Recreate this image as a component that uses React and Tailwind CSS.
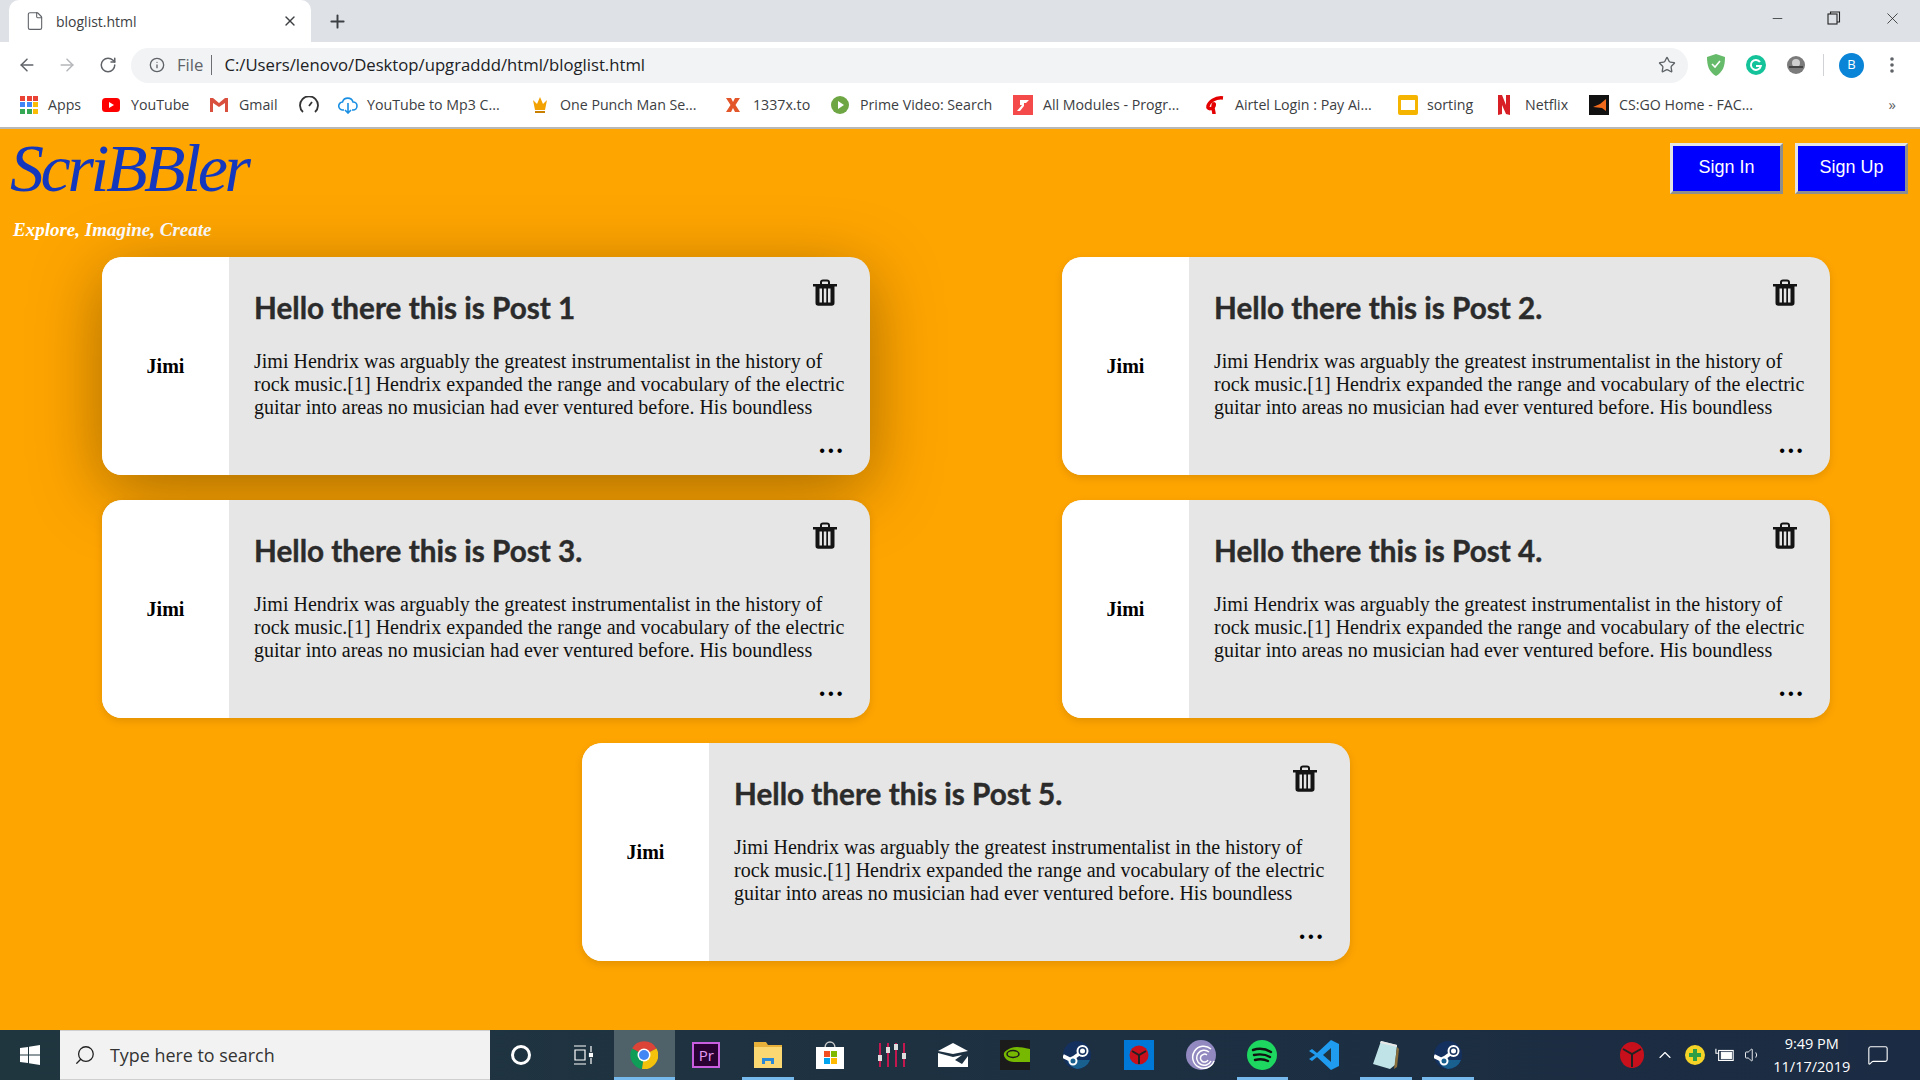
import React from 'react';
import { ArrowLeft, ArrowRight, RotateCw, Info, Star, X, Plus, Minus, File, Search, ChevronUp, Volume1, MessageSquare } from 'lucide-react';

const body = 'Jimi Hendrix was arguably the greatest instrumentalist in the history of rock music.[1] Hendrix expanded the range and vocabulary of the electric guitar into areas no musician had ever ventured before. His boundless';

function Trash() {
  return (
    <svg viewBox="0 0 24 27" className="w-[24px] h-[27px]">
      <path d="M0 5h24v2.4H0zM7 5V3.2C7 1.4 8.2.4 10 .4h4c1.800 0 3 1 3 2.800V5h-2V3.400c0-.6-.4-1-1-1h-4c-.6 0-1 .4-1 1V5z" fill="#141414" />
      <path fillRule="evenodd" d="M2.500 7h19v17c0 1.700-1.100 2.800-2.800 2.800H5.300c-1.700 0-2.800-1.100-2.800-2.800zM6.500 9.500v14h2.500v-14zM10.800 9.500v14h2.500v-14zM15 9.500v14h2.500v-14z" fill="#141414" />
    </svg>
  );
}

function Card({ title, shadow }) {
  return (
    <div className={`relative flex w-[768px] h-[218px] rounded-[20px] overflow-hidden bg-[#e6e6e6] ${shadow}`}>
      <div className="w-[127px] bg-white flex items-center justify-center font-['Liberation_Serif',serif] font-bold text-[20px] text-black">Jimi</div>
      <div className="flex-1 pl-[25px] pr-[25px] pt-[31px] flex flex-col">
        <h2 className="font-['Lato',sans-serif] font-bold text-[29.700px] leading-[40px] text-[#2b2b2b] [-webkit-text-stroke:0.4px_#2b2b2b]">{title}</h2>
        <p className="mt-[22px] font-['Liberation_Serif',serif] text-[20px] leading-[23px] text-[#111]">{body}</p>
        <div className="mt-[13px] text-right font-['Liberation_Serif',serif] font-bold text-[27px] leading-[24px] tracking-[2px] text-black">...</div>
      </div>
      <div className="absolute top-[22px] right-[33px]"><Trash /></div>
    </div>
  );
}

function TabBar() {
  return (
    <div className="h-[42px] bg-[#dee1e6] flex items-end pl-[9px]">
      <div className="w-[302px] h-[42px] bg-white rounded-t-[10px] flex items-center pl-[16px] pr-[13px] gap-[11px]">
        <File size={20} strokeWidth={1.300} className="text-[#5f6368]" />
        <span className="flex-1 font-['Open_Sans',sans-serif] text-[14px] text-[#3c4043]">bloglist.html</span>
        <X size={16} strokeWidth={2} className="text-[#3c4043]" />
      </div>
      <Plus size={21} strokeWidth={2.200} className="ml-[16px] mb-[10px] text-[#3c4043]" />
      <div className="flex-1" />
      <div className="flex items-center h-full pr-[18px] gap-[42px] pb-[6px] text-[#222]">
        <Minus size={15} strokeWidth={1.200} />
        <svg viewBox="0 0 14 14" className="w-[14px] h-[14px]" fill="none" stroke="#222" strokeWidth="1.100"><rect x="1" y="3" width="9" height="10" /><path d="M3.500 3V1h9v10h-2.500" /></svg>
        <X size={19} strokeWidth={1} />
      </div>
    </div>
  );
}

function Toolbar() {
  return (
    <div className="h-[46px] bg-white flex items-center">
      <ArrowLeft size={20} strokeWidth={1.800} className="ml-[17px] text-[#5f6368]" />
      <ArrowRight size={20} strokeWidth={1.800} className="ml-[20px] text-[#b4b6b9]" />
      <RotateCw size={18} strokeWidth={2} className="ml-[22px] text-[#5f6368]" />
      <div className="ml-[14px] w-[1557px] h-[35px] rounded-full bg-[#f1f3f4] flex items-center pl-[18px] font-['Open_Sans',sans-serif] text-[16.700px]">
        <Info size={16} strokeWidth={2} className="text-[#5f6368]" />
        <span className="ml-[12px] text-[#5f6368]">File</span>
        <span className="ml-[8px] w-px h-[20px] bg-[#6b6e72]" />
        <span className="ml-[12px] flex-1 text-[#202124]">C:/Users/lenovo/Desktop/upgraddd/html/bloglist.html</span>
        <Star size={18} strokeWidth={1.800} className="mr-[12px] text-[#5f6368]" />
      </div>
      <svg viewBox="0 0 20 22" className="ml-[18px] w-[20px] h-[22px]"><path d="M10 0l9 3c0 9-2 15-9 19C3 18 1 12 1 3z" fill="#66bb6a" /><path d="M6 10l3 3 5-6" fill="none" stroke="#fff" strokeWidth="1.600" /></svg>
      <svg viewBox="0 0 20 20" className="ml-[20px] w-[20px] h-[20px]"><circle cx="10" cy="10" r="10" fill="#15c39a" /><path d="M14 7a5 5 0 1 0 .8 4H10" fill="none" stroke="#fff" strokeWidth="2" /></svg>
      <svg viewBox="0 0 20 20" className="ml-[20px] w-[20px] h-[20px]"><circle cx="10" cy="10" r="9" fill="#7b7b7b" /><circle cx="10" cy="8" r="4" fill="#cfcfcf" /><path d="M3 12h14" stroke="#444" strokeWidth="2" /></svg>
      <span className="ml-[17px] w-px h-[22px] bg-[#d0d2d5]" />
      <span className="ml-[15px] w-[25px] h-[25px] rounded-full bg-[#0a84d6] text-white flex items-center justify-center font-['Open_Sans',sans-serif] text-[13px]">B</span>
      <svg viewBox="0 0 4 16" className="ml-[26px] w-[4px] h-[16px]" fill="#5f6368"><circle cx="2" cy="2" r="1.800" /><circle cx="2" cy="8" r="1.800" /><circle cx="2" cy="14" r="1.800" /></svg>
    </div>
  );
}

const appsDots = ['#ea4335', '#ea4335', '#ea4335', '#4285f4', '#4285f4', '#fbbc05', '#34a853', '#34a853', '#fbbc05'];

const bookmarks = [
  { w: 'w-[82px]', label: 'Apps', gap: 'ml-[10px]', icon: <div className="grid grid-cols-3 gap-[1.500px] w-[18px]">{appsDots.map((c, i) => <span key={i} className="w-[5px] h-[5px]" style={{ backgroundColor: c }} />)}</div> },
  { w: 'w-[108px]', label: 'YouTube', gap: 'ml-[11px]', icon: <svg viewBox="0 0 18 14" className="w-[18px] h-[14px]"><rect width="18" height="14" rx="3.500" fill="#f00" /><path d="M7 4l5 3-5 3z" fill="#fff" /></svg> },
  { w: 'w-[89px]', label: 'Gmail', gap: 'ml-[11px]', icon: <svg viewBox="0 0 18 14" className="w-[18px] h-[14px]"><path d="M0 0h3l6 5 6-5h3v14h-3V5L9 9 3 5v9H0z" fill="#d9503f" /></svg> },
  { w: 'w-[39px]', label: '', icon: <svg viewBox="0 0 20 18" className="w-[20px] h-[18px]" fill="none" stroke="#333" strokeWidth="1.800"><path d="M4 16a9 9 0 1 1 12 0M10 10l3-4" /></svg> },
  { w: 'w-[193px]', label: 'YouTube to Mp3 C...', gap: 'ml-[9px]', icon: <svg viewBox="0 0 20 18" className="w-[20px] h-[18px]" fill="none" stroke="#1a8fe3" strokeWidth="1.600"><path d="M6 14H5a4 4 0 0 1-.5-8A5.500 5.500 0 0 1 15 6a4 4 0 0 1 0 8h-1M10 7v10M7 14l3 3 3-3" /></svg> },
  { w: 'w-[194px]', label: 'One Punch Man Se...', gap: 'ml-[11px]', icon: <svg viewBox="0 0 18 18" className="w-[18px] h-[18px]"><path d="M2 4l4 4 3-7 3 7 4-4-2 10H4z" fill="#f2a100" /><rect x="4" y="15" width="10" height="2" fill="#c97f00" /></svg> },
  { w: 'w-[106px]', label: '1337x.to', gap: 'ml-[12px]', icon: <svg viewBox="0 0 16 16" className="w-[16px] h-[16px]"><path d="M1 1h5l2 4 2-4h5l-4.500 7L15 15h-5l-2-4-2 4H1l4.500-7z" fill="#e2562a" /></svg> },
  { w: 'w-[182px]', label: 'Prime Video: Search', gap: 'ml-[11px]', icon: <svg viewBox="0 0 18 18" className="w-[18px] h-[18px]"><circle cx="9" cy="9" r="9" fill="#6ea644" /><path d="M7 5l6 4-6 4z" fill="#fff" /></svg> },
  { w: 'w-[192px]', label: 'All Modules - Progr...', gap: 'ml-[10px]', icon: <svg viewBox="0 0 20 20" className="w-[20px] h-[20px]"><rect width="20" height="20" fill="#f44a4a" /><path d="M7 5h9l-3 3h-2v3l-4 5H4l5-6H7z" fill="#fff" /></svg> },
  { w: 'w-[193px]', label: 'Airtel Login : Pay Ai...', gap: 'ml-[10px]', icon: <svg viewBox="0 0 20 20" className="w-[20px] h-[20px]" fill="none" stroke="#e40000" strokeWidth="3.500"><path d="M18 3C10 2 4 7 3 11c-1 4 5 3 6 0 1-3-1-3-1 1 0 3 1 5 1 7" /></svg> },
  { w: 'w-[100px]', label: 'sorting', gap: 'ml-[9px]', icon: <svg viewBox="0 0 20 20" className="w-[20px] h-[20px]"><rect width="20" height="20" rx="2" fill="#f4b400" /><rect x="3" y="5" width="14" height="10" fill="#fff" /></svg> },
  { w: 'w-[91px]', label: 'Netflix', gap: 'ml-[15px]', icon: <svg viewBox="0 0 12 20" className="w-[12px] h-[20px]"><path d="M0 0h4l4 10V0h4v20l-4-1-4-9v9l-4 1z" fill="#d81f26" /></svg> },
  { w: 'w-[200px]', label: 'CS:GO Home - FAC...', gap: 'ml-[10px]', icon: <svg viewBox="0 0 20 20" className="w-[20px] h-[20px]"><rect width="20" height="20" fill="#111" /><path d="M17 4v12l-4-3-9-1 7-3z" fill="#f26a1b" /></svg> },
];

function Bookmarks() {
  return (
    <div className="h-[41px] bg-white border-b-2 border-[#b8b8b8] flex items-center pb-[5px] pl-[20px] relative font-['Open_Sans',sans-serif] text-[14.200px] text-[#3c4043]">
      {bookmarks.map((b, i) => (
        <div key={i} className={`${b.w} flex items-center shrink-0 whitespace-nowrap`}>
          {b.icon}
          {b.label && <span className={b.gap}>{b.label}</span>}
        </div>
      ))}
      <span className="absolute right-[24px] top-[5px] text-[#5f6368] text-[15px]">»</span>
    </div>
  );
}

function ChromeIcon() {
  return (
    <svg viewBox="0 0 28 28" className="w-[28px] h-[28px]">
      <path d="M14 14L2 7.500A14 14 0 0 1 26.500 7.500z" fill="#db4437" />
      <path d="M14 14L2 7.500A14 14 0 0 0 12 28z" fill="#0f9d58" />
      <path d="M14 14L26.500 7.500A14 14 0 0 1 12 28z" fill="#f4c20d" />
      <circle cx="14" cy="14" r="6.500" fill="#fff" />
      <circle cx="14" cy="14" r="5" fill="#4285f4" />
    </svg>
  );
}

function Steam() {
  return (
    <svg viewBox="0 0 28 28" className="w-[28px] h-[28px]" fill="none">
      <circle cx="14" cy="14" r="14" fill="#14305e" />
      <path d="M14 28a14 14 0 0 0 13-9H4a14 14 0 0 0 10 9z" fill="#19608f" />
      <path d="M20 10L9 18" stroke="#fff" strokeWidth="3.500" />
      <path d="M0 15l10 5" stroke="#fff" strokeWidth="4" />
      <circle cx="19.500" cy="10" r="5" stroke="#fff" strokeWidth="2" fill="#14305e" />
      <circle cx="19.500" cy="10" r="2.500" fill="#fff" />
      <circle cx="10" cy="20" r="3.500" stroke="#fff" strokeWidth="2" fill="#19608f" />
    </svg>
  );
}

function RedBug() {
  return (
    <svg viewBox="0 0 20 20" className="w-[20px] h-[20px]">
      <circle cx="10" cy="10" r="9.500" fill="#c8101c" />
      <path d="M3 6l7 4 7-4M10 10v9" fill="none" stroke="#222" strokeWidth="2" />
    </svg>
  );
}

const slots = [
  { icon: <div className="w-[20px] h-[20px] rounded-full border-[3px] border-white" /> },
  { icon: <svg viewBox="0 0 20 20" className="w-[20px] h-[20px]" fill="none" stroke="#fff" strokeWidth="1.200"><path d="M1 1h12M1 19h12M2 5h10v10H2zM18 1v6M18 13v6" /><rect x="16.500" y="8.500" width="3" height="3" fill="#fff" /></svg> },
  { active: true, icon: <ChromeIcon /> },
  { icon: <div className="w-[28px] h-[26px] bg-[#2a0133] border-2 border-[#c95fe0] flex items-center justify-center font-['Open_Sans',sans-serif] text-[15px] text-[#e39bf2]">Pr</div> },
  { line: true, icon: <svg viewBox="0 0 28 26" className="w-[28px] h-[26px]"><path d="M0 0h12l2 3h14v23H0z" fill="#e8b13a" /><path d="M0 5h28v21H0z" fill="#fcd873" /><path d="M8 22v-6h12v6h-3v-3h-6v3z" fill="#2b8ad8" /></svg> },
  { icon: <svg viewBox="0 0 28 28" className="w-[28px] h-[28px]"><path d="M9 7c0-8 10-8 10 0" fill="none" stroke="#ccc" strokeWidth="1.500" /><rect y="6" width="28" height="22" fill="#fff" /><rect x="8" y="10" width="6" height="6" fill="#f25022" /><rect x="15" y="10" width="6" height="6" fill="#7fba00" /><rect x="8" y="17" width="6" height="6" fill="#00a4ef" /><rect x="15" y="17" width="6" height="6" fill="#ffb900" /></svg> },
  { icon: <svg viewBox="0 0 30 24" className="w-[30px] h-[24px]"><path d="M3 0v24M11 0v24M19 0v24M27 0v24" stroke="#c2184f" strokeWidth="2" /><rect x="1" y="12" width="4" height="6" fill="#ddd" /><rect x="9" y="4" width="4" height="6" fill="#ddd" /><rect x="17" y="1" width="4" height="6" fill="#ddd" /><rect x="25" y="10" width="4" height="6" fill="#ddd" /></svg> },
  { icon: <svg viewBox="0 0 30 24" className="w-[30px] h-[24px]"><path d="M15 0l15 8-15 3L0 8zM0 10l15 4 9-2-7 5 7 4 6-8v11H0z" fill="#fff" /></svg> },
  { icon: <svg viewBox="0 0 30 30" className="w-[30px] h-[30px]"><rect width="30" height="30" fill="#1b1b1b" /><path d="M11 8c5-2 10-1 19 1v13H14C7 22 3 17 4 13c1-2 4-4 7-5z" fill="#76b900" /><ellipse cx="13" cy="14" rx="6" ry="3.500" fill="none" stroke="#1b1b1b" strokeWidth="1.500" /></svg> },
  { icon: <Steam /> },
  { icon: <div className="w-[30px] h-[30px] bg-[#0078d7] flex items-center justify-center"><RedBug /></div> },
  { icon: <svg viewBox="0 0 30 30" className="w-[30px] h-[30px]" fill="none"><circle cx="15" cy="15" r="15" fill="#9189c0" /><path d="M25 9a11 11 0 1 0 3 12M23 12a7.500 7.500 0 1 0 2 9M21 15a4 4 0 1 0 1 5" stroke="#fff" strokeWidth="1.500" /></svg> },
  { line: true, icon: <svg viewBox="0 0 30 30" className="w-[30px] h-[30px]" fill="none"><circle cx="15" cy="15" r="15" fill="#1ed760" /><path d="M6 10c6-2 13-1 18 2M7 15c5-1 11-1 16 2M8 20c4-1 9-1 13 1" stroke="#111" strokeWidth="2.400" strokeLinecap="round" /></svg> },
  { icon: <svg viewBox="0 0 30 30" className="w-[30px] h-[30px]"><path d="M22 0l8 4v22l-8 4L8 17l-5 4-3-2 6-4-6-4 3-2 5 4z" fill="#1f9cf0" /><path d="M22 8l-8 7 8 7z" fill="#1f3642" /></svg> },
  { line: true, icon: <svg viewBox="0 0 28 30" className="w-[28px] h-[30px]"><path d="M9 1l16 4-2 20-5 4L1 24z" fill="#bfe3e6" /><path d="M9 1l16 4v2L8 3z" fill="#e6e6e6" /><path d="M25 7l2 2-2 18-3 2z" fill="#8a6f3c" /></svg> },
  { line: true, icon: <Steam /> },
];

function Taskbar() {
  return (
    <div className="h-[50px] flex bg-linear-to-r from-[#20363f] to-[#1b2b43] text-white font-['Open_Sans',sans-serif]">
      <div className="w-[60px] flex items-center justify-center">
        <svg viewBox="0 0 20 20" className="w-[20px] h-[20px]" fill="#fff"><path d="M0 3l8-1.100V9.500H0zM9 1.700L20 0v9.500H9zM0 10.500h8V18l-8-1zM9 10.500h11V20L9 18.300z" /></svg>
      </div>
      <div className="w-[430px] bg-[#f2f2f2] border-y border-[#cfcfcf] flex items-center pl-[14px] text-[#333] text-[17.900px]">
        <Search size={22} strokeWidth={1.400} className="text-[#222] -scale-x-100" />
        <span className="ml-[14px]">Type here to search</span>
      </div>
      {slots.map((s, i) => (
        <div key={i} className={`w-[61.800px] shrink-0 flex items-center justify-center relative ${s.active ? 'bg-[#4f6169]' : ''}`}>
          {s.icon}
          {s.line && <span className="absolute bottom-0 left-[5px] right-[5px] h-[3px] bg-[#76b9ed]" />}
          {s.active && <span className="absolute bottom-0 left-0 right-0 h-[3px] bg-[#76b9ed]" />}
        </div>
      ))}
      <div className="flex-1 flex items-center pl-[141px]">
        <svg viewBox="0 0 24 26" className="w-[24px] h-[26px] shrink-0"><ellipse cx="12" cy="13" rx="12" ry="13" fill="#c8101c" /><path d="M3 7l9 5 9-5M12 12v13" fill="none" stroke="#222" strokeWidth="2" /></svg>
        <ChevronUp size={20} strokeWidth={1.400} className="ml-[11px] shrink-0" />
        <svg viewBox="0 0 20 20" className="ml-[10px] w-[20px] h-[20px] shrink-0"><circle cx="10" cy="10" r="10" fill="#f5d327" /><path d="M8 4h4v4h4v4h-4v4H8v-4H4V8h4z" fill="#2f9e44" /></svg>
        <svg viewBox="0 0 22 16" className="ml-[10px] w-[20px] h-[16px] shrink-0" fill="none" stroke="#fff" strokeWidth="1.200"><rect x="4" y="3" width="16" height="11" /><rect x="7" y="5" width="11" height="7" fill="#fff" /><path d="M1 1v5h3" /></svg>
        <Volume1 size={18} strokeWidth={1.200} className="ml-[9px] shrink-0" />
        <div className="ml-[8px] w-[84px] shrink-0 text-center text-[14.500px] leading-[23px]">
          <div>9:49 PM</div>
          <div>11/17/2019</div>
        </div>
        <MessageSquare size={22} strokeWidth={1.200} className="ml-[13px] shrink-0" />
      </div>
    </div>
  );
}

export default function App() {
  return (
    <div className="h-[1080px] w-[1920px] overflow-hidden flex flex-col">
      <TabBar />
      <Toolbar />
      <Bookmarks />
      <main className="flex-1 bg-[#ffa500]">
        <header className="h-[128px] flex justify-between">
          <div className="pl-[10px] pt-[1px]">
            <div className="font-['Liberation_Serif',serif] italic text-[68px] leading-[76px] tracking-[-3.400px] text-[#1338be]">ScriBBler</div>
            <div className="mt-[11px] pl-[3px] font-['Liberation_Serif',serif] italic font-bold text-[19px] leading-[26px] text-white">Explore, Imagine, Create</div>
          </div>
          <div className="flex gap-[12px] pt-[14px] pr-[12px]">
            <button className="w-[113px] h-[51px] pb-[2px] bg-[#0000ff] text-white font-['Liberation_Sans',sans-serif] text-[18px] border-[3px] border-t-[#e4e4e4] border-l-[#e4e4e4] border-r-[#8e8e8e] border-b-[#8e8e8e]">Sign In</button>
            <button className="w-[113px] h-[51px] pb-[2px] bg-[#0000ff] text-white font-['Liberation_Sans',sans-serif] text-[18px] border-[3px] border-t-[#e4e4e4] border-l-[#e4e4e4] border-r-[#8e8e8e] border-b-[#8e8e8e]">Sign Up</button>
          </div>
        </header>
        <section className="ml-[102px] w-[1728px] flex flex-wrap justify-center gap-x-[192px] gap-y-[25px]">
          <Card title="Hello there this is Post 1" shadow="shadow-[0_16px_70px_rgba(0,0,0,0.35)]" />
          <Card title="Hello there this is Post 2." shadow="shadow-[0_3px_8px_rgba(0,0,0,0.12)]" />
          <Card title="Hello there this is Post 3." shadow="shadow-[0_3px_8px_rgba(0,0,0,0.12)]" />
          <Card title="Hello there this is Post 4." shadow="shadow-[0_3px_8px_rgba(0,0,0,0.12)]" />
          <Card title="Hello there this is Post 5." shadow="shadow-[0_3px_8px_rgba(0,0,0,0.12)]" />
        </section>
      </main>
      <Taskbar />
    </div>
  );
}
